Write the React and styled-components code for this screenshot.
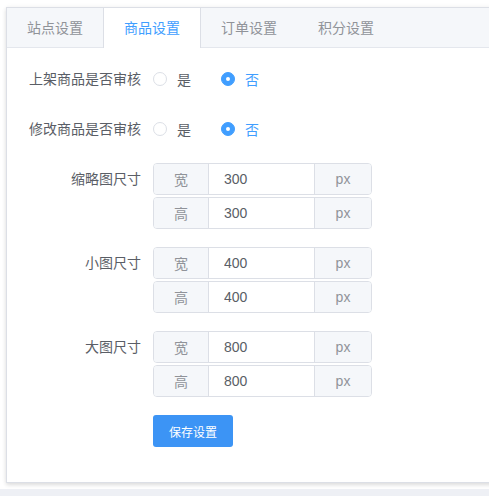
import React, { useState } from 'react';
import styled, { createGlobalStyle } from 'styled-components';

const GlobalStyle = createGlobalStyle`
  html, body {
    margin: 0;
    padding: 0;
    background: #fff;
    overflow: hidden;
  }
  body {
    font-family: "Liberation Sans", "Noto Sans CJK SC", sans-serif;
    -webkit-font-smoothing: antialiased;
  }
`;

const Page = styled.div`
  width: 489px;
  height: 496px;
  overflow: hidden;
  position: relative;
  display: flex;
  flex-direction: column;
`;

const Stage = styled.div`
  padding: 7px 0 0 6px;
  height: 489px;
  box-sizing: border-box;
`;

const Card = styled.div`
  width: 540px;
  height: 476px;
  box-sizing: border-box;
  background: #fff;
  border: 1px solid #dcdfe6;
  box-shadow: 0 2px 4px 0 rgba(0, 0, 0, 0.12), 0 0 6px 0 rgba(0, 0, 0, 0.04);
`;

const TabBar = styled.div`
  display: flex;
  height: 39px;
  background: #f5f7fa;
  border-bottom: 1px solid #e4e7ed;
`;

const Tab = styled.div`
  height: 40px;
  line-height: 40px;
  padding: 0 20px;
  font-size: 14px;
  box-sizing: border-box;
  color: ${(p) => (p.$active ? '#409eff' : '#909399')};
  background: ${(p) => (p.$active ? '#fff' : 'transparent')};
  border-left: 1px solid ${(p) => (p.$active ? '#dcdfe6' : 'transparent')};
  border-right: 1px solid ${(p) => (p.$active ? '#dcdfe6' : 'transparent')};
  margin-left: ${(p) => (p.$first ? '-1px' : '0')};
  margin-right: -1px;
  cursor: pointer;
`;

const Body = styled.div`
  padding: 15px 15px 15px 15px;
`;

const FormItem = styled.div`
  display: flex;
  align-items: flex-start;
  margin-bottom: 18px;
`;

const Label = styled.div`
  width: 131px;
  flex: none;
  padding-right: 12px;
  box-sizing: border-box;
  text-align: right;
  font-size: 14px;
  line-height: 32px;
  color: #5a5e66;
`;

const Control = styled.div`
  display: flex;
  flex-direction: column;
  gap: 2px;
`;

const RadioGroup = styled.div`
  display: flex;
  align-items: center;
  height: 32px;
`;

const Radio = styled.label`
  display: flex;
  align-items: center;
  margin-right: 30px;
  font-size: 14px;
  color: ${(p) => (p.$checked ? '#409eff' : '#5a5e66')};
  cursor: pointer;
`;

const RadioDot = styled.span`
  width: 14px;
  height: 14px;
  box-sizing: border-box;
  border-radius: 50%;
  border: 1px solid ${(p) => (p.$checked ? '#409eff' : '#dcdfe6')};
  background: ${(p) => (p.$checked ? '#409eff' : '#fff')};
  margin-right: 10px;
  position: relative;

  &::after {
    content: '';
    display: ${(p) => (p.$checked ? 'block' : 'none')};
    position: absolute;
    left: 50%;
    top: 50%;
    width: 4px;
    height: 4px;
    border-radius: 50%;
    background: #fff;
    transform: translate(-50%, -50%);
  }
`;

const InputGroup = styled.div`
  display: flex;
  width: 219px;
  height: 32px;
  box-sizing: border-box;
  border: 1px solid #dcdfe6;
  border-radius: 4px;
  overflow: hidden;
  font-size: 14px;
`;

const Addon = styled.div`
  width: ${(p) => p.$w}px;
  flex: none;
  background: #f5f7fa;
  color: #909399;
  display: flex;
  align-items: center;
  justify-content: center;
  border-left: ${(p) => (p.$right ? '1px solid #dcdfe6' : 'none')};
  border-right: ${(p) => (p.$right ? 'none' : '1px solid #dcdfe6')};
`;

const Input = styled.input`
  flex: 1;
  min-width: 0;
  border: none;
  outline: none;
  padding: 0 15px;
  font-family: inherit;
  font-size: 14px;
  color: #5a5e66;
  background: #fff;
`;

const SaveButton = styled.button`
  margin-left: 131px;
  width: 80px;
  height: 32px;
  border: none;
  border-radius: 3px;
  background: #3c94f5;
  color: #fff;
  font-family: inherit;
  font-size: 12px;
  cursor: pointer;
`;

const BottomStrip = styled.div`
  flex: 1;
  background: #eef0f5;
`;

const tabs = ['站点设置', '商品设置', '订单设置', '积分设置'];

const sizes = [
  { label: '缩略图尺寸', w: '300', h: '300' },
  { label: '小图尺寸', w: '400', h: '400' },
  { label: '大图尺寸', w: '800', h: '800' },
];

function RadioRow({ label, value, onChange }) {
  return (
    <FormItem>
      <Label>{label}</Label>
      <RadioGroup>
        {[['yes', '是'], ['no', '否']].map(([k, t]) => (
          <Radio key={k} $checked={value === k} onClick={() => onChange(k)}>
            <RadioDot $checked={value === k} />
            {t}
          </Radio>
        ))}
      </RadioGroup>
    </FormItem>
  );
}

export default function App() {
  const [active, setActive] = useState(1);
  const [shelf, setShelf] = useState('no');
  const [edit, setEdit] = useState('no');

  return (
    <Page>
      <GlobalStyle />
      <Stage>
        <Card>
          <TabBar>
            {tabs.map((t, i) => (
              <Tab key={t} $active={i === active} $first={i === 0} onClick={() => setActive(i)}>
                {t}
              </Tab>
            ))}
          </TabBar>
          <Body>
            <RadioRow label="上架商品是否审核" value={shelf} onChange={setShelf} />
            <RadioRow label="修改商品是否审核" value={edit} onChange={setEdit} />
            {sizes.map((s) => (
              <FormItem key={s.label}>
                <Label>{s.label}</Label>
                <Control>
                  <InputGroup>
                    <Addon $w={54}>宽</Addon>
                    <Input defaultValue={s.w} />
                    <Addon $w={56} $right>px</Addon>
                  </InputGroup>
                  <InputGroup>
                    <Addon $w={54}>高</Addon>
                    <Input defaultValue={s.h} />
                    <Addon $w={56} $right>px</Addon>
                  </InputGroup>
                </Control>
              </FormItem>
            ))}
            <SaveButton>保存设置</SaveButton>
          </Body>
        </Card>
      </Stage>
      <BottomStrip />
    </Page>
  );
}
